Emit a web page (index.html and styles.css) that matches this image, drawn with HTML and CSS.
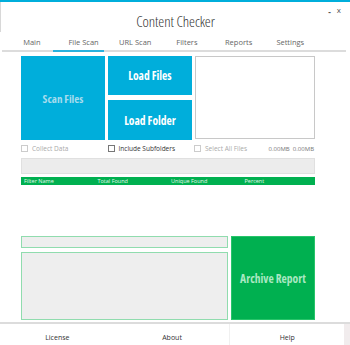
FILE: index.html
```html
<!DOCTYPE html>
<html>
<head>
<meta charset="utf-8">
<link rel="stylesheet" href="styles.css">
</head>
<body>
<div class="app">
  <header class="titlebar">
    <div class="title">Content Checker</div>
    <div class="winctl"><span class="min">-</span><span class="close">x</span></div>
  </header>
  <nav class="tabs">
    <div class="tab">Main</div>
    <div class="tab active">File Scan</div>
    <div class="tab">URL Scan</div>
    <div class="tab">Filters</div>
    <div class="tab">Reports</div>
    <div class="tab">Settings</div>
  </nav>
  <main class="content">
    <div class="actions">
      <div class="btn big disabled">Scan Files</div>
      <div class="stack">
        <div class="btn">Load Files</div>
        <div class="btn tall">Load Folder</div>
      </div>
      <div class="listbox"></div>
    </div>
    <div class="opts">
      <label class="chk off"><span class="box"></span>Collect Data</label>
      <label class="chk"><span class="box"></span>Include Subfolders</label>
      <label class="chk off wide"><span class="box"></span>Select All Files</label>
      <span class="sizes">0.00MB&nbsp; 0.00MB</span>
    </div>
    <div class="progress"></div>
    <div class="thead">
      <span>Filter Name</span><span>Total Found</span><span>Unique Found</span><span>Percent</span>
    </div>
    <div class="tbody"></div>
    <div class="bottom">
      <div class="fields">
        <div class="field small"></div>
        <div class="field large"></div>
      </div>
      <div class="archive">Archive Report</div>
    </div>
  </main>
  <footer class="footer">
    <div class="flink">License</div>
    <div class="flink">About</div>
    <div class="flink last">Help</div>
    <div class="fend"></div>
  </footer>
</div>
</body>
</html>
```
FILE: styles.css
```css
* { box-sizing: border-box; }
html, body { margin: 0; padding: 0; background: #fff; }
body { font-family: "Open Sans", "Noto Sans", sans-serif; color: #555; width: 350px; height: 345px; overflow: hidden; }
.app { border-top: 2px solid #00aedb; height: 345px; display: flex; flex-direction: column; }
.titlebar { height: 30px; display: flex; justify-content: center; align-items: center; position: relative; border-left: 1px solid #d8d8d8; }
.title { font-size: 15px; font-weight: 300; font-stretch: 82%; color: #333; padding-top: 7px; letter-spacing: -0.1px; }
.winctl { position: absolute; right: 9px; top: 0; font-size: 8px; color: #555; display: flex; gap: 6px; }
.winctl .min { font-weight: bold; padding-top: 4px; }
.winctl .close { padding-top: 2px; }
.tabs { display: flex; height: 20px; margin: 0 4px 0 2px; padding-left: 4px; border-bottom: 2px solid #dcdcdc; }
.tab { width: 51.7px; text-align: center; font-size: 7.5px; color: #666; line-height: 20px; position: relative; font-stretch: 90%; }
.tab.active::after { content: ""; position: absolute; left: -5px; width: 51px; bottom: -2px; height: 2px; background: #2ab1dd; }
.content { padding: 4px 0 0 21px; width: 315px; flex: 1; display: flex; flex-direction: column; box-sizing: content-box; }
.actions { display: flex; gap: 3px; height: 84px; }
.btn { background: #00aedb; color: #fff; font-weight: bold; font-size: 11.5px; font-stretch: 85%; display: flex; align-items: center; justify-content: center; width: 84px; height: 39px; }
.btn.big { height: 84px; }
.btn.tall { height: 40px; }
.btn.disabled { color: #a6dcee; font-size: 11px; }
.stack { display: flex; flex-direction: column; gap: 5px; }
.listbox { width: 120px; height: 83px; border: 1px solid #c8c8c8; }
.opts { display: flex; align-items: center; height: 17px; font-size: 6.5px; color: #333; width: 294px; white-space: nowrap; }
.chk { display: flex; align-items: center; gap: 4px; width: 87px; }
.chk.wide { width: 75px; }
.chk .box { width: 7px; height: 7px; border: 1px solid #777; background: #fff; flex: none; }
.chk.off { color: #aaa; }
.chk.off .box { border-color: #ccc; }
.sizes { margin-left: auto; color: #777; padding-right: 1px; font-size: 6px; }
.progress { width: 294px; height: 16px; background: #ececec; border: 1px solid #e0e0e0; margin-top: 1px; }
.thead { width: 294px; height: 8px; background: #00b050; margin-top: 3px; display: grid; grid-template-columns: repeat(4, 73.5px); color: #e6f7ec; font-size: 5.5px; line-height: 8px; padding-left: 3px; }
.tbody { height: 51px; }
.bottom { display: flex; gap: 3px; width: 294px; height: 84px; }
.fields { display: flex; flex-direction: column; gap: 4px; width: 207px; }
.field { background: #eeeeee; border: 1px solid #90dcae; }
.field.small { height: 12px; }
.field.large { height: 68px; }
.archive { width: 84px; height: 84px; background: #00b050; color: #a9e8c2; font-weight: bold; font-size: 11.5px; font-stretch: 85%; display: flex; align-items: center; justify-content: center; border: 1px solid #27c46a; }
.footer { display: flex; height: 23px; border-top: 2px solid #dcdcdc; }
.flink { width: 114.7px; text-align: center; font-size: 7px; color: #333; padding-top: 9px; }
.flink.last { border-left: 1px solid #f0f0f0; }
.fend { flex: 1; background: #f1eced; }
```
